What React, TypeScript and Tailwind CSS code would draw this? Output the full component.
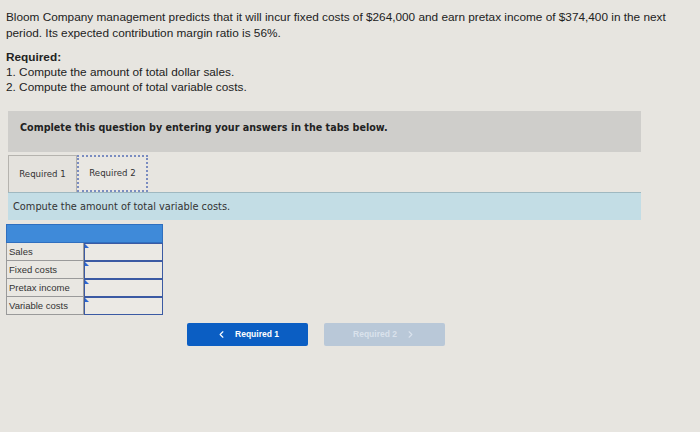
import { ChevronLeft, ChevronRight } from 'lucide-react';

const rows = ['Sales', 'Fixed costs', 'Pretax income', 'Variable costs'];

function AnswerRow({ label }: { label: string }) {
  return (
    <div className="flex h-[18px]">
      <div className="w-[78px] border border-[#9a9a9a] border-t-0 bg-[#e9e7e2] pl-[2px] text-[9.5px] leading-[17px] text-[#333]">
        {label}
      </div>
      <div className="relative w-[79px] border-[1.5px] border-t-[1px] border-[#3b5aa3] bg-[#ebe9e4]">
        <span className="absolute left-0 top-0 h-0 w-0 border-l-[4px] border-t-[4px] border-l-[#2a67d4] border-t-transparent" />
      </div>
    </div>
  );
}

export default function App() {
  return (
    <div className="h-[432px] w-[700px] bg-[#e7e5e0] font-['Liberation_Sans',Arial,sans-serif] text-[#222]">
      {/* Question */}
      <div className="px-[6px] pt-[9px] text-[11.8px] leading-[16px]">
        <p>
          Bloom Company management predicts that it will incur fixed costs of $264,000 and earn pretax income of $374,400 in the next
          period. Its expected contribution margin ratio is 56%.
        </p>
        <p className="mt-[8px] font-bold">Required:</p>
        <p className="leading-[15px]">1. Compute the amount of total dollar sales.</p>
        <p className="leading-[15px]">2. Compute the amount of total variable costs.</p>
      </div>

      {/* Instructions */}
      <div className="ml-[8px] mt-[16px] h-[41px] w-[633px] bg-[#cfcecb] pl-[12px] pt-[10px] font-['DejaVu_Sans',Verdana,sans-serif] text-[9.6px] font-bold text-[#222]">
        Complete this question by entering your answers in the tabs below.
      </div>

      {/* Tabs */}
      <div className="ml-[8px] mt-[3px] flex h-[37px] items-stretch font-['DejaVu_Sans',Verdana,sans-serif] text-[8.6px] text-[#333]">
        <div className="flex w-[69px] items-center justify-center border border-b-0 border-[#b5b3ae] bg-[#e4e2dd]">
          Required 1
        </div>
        <div className="flex w-[71px] items-center justify-center border-2 border-dotted border-[#7a8cc0] bg-[#e9e7e2]">
          Required 2
        </div>
      </div>
      <div className="ml-[8px] h-[28px] w-[633px] border-t border-[#9fb8c0] bg-[#c3dde5] pl-[5px] pt-[7px] font-['DejaVu_Sans',Verdana,sans-serif] text-[9.8px] text-[#333]">
        Compute the amount of total variable costs.
      </div>

      {/* Answer table */}
      <div className="ml-[6px] mt-[4px] w-[157px]">
        <div className="h-[19px] border border-[#2f6fbf] bg-[#3f8ad9]" />
        {rows.map((r) => (
          <AnswerRow key={r} label={r} />
        ))}
      </div>

      {/* Nav buttons */}
      <div className="ml-[187px] mt-[8px] flex gap-[16px] text-[8.5px] font-bold">
        <button className="flex h-[23px] w-[121px] items-center justify-center gap-[8px] rounded-[2px] bg-[#0b5ec3] text-white">
          <ChevronLeft className="h-[11px] w-[11px]" strokeWidth={2.5} />
          <span>Required 1</span>
        </button>
        <button className="flex h-[23px] w-[121px] items-center justify-center gap-[8px] rounded-[2px] bg-[#b9c8d8] text-[#d9e2ec]">
          <span>Required 2</span>
          <ChevronRight className="h-[11px] w-[11px]" strokeWidth={2.5} />
        </button>
      </div>
    </div>
  );
}
